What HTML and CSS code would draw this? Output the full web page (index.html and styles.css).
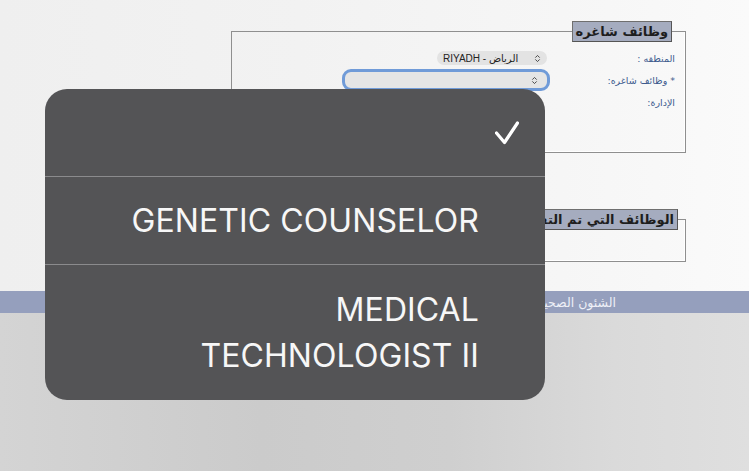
FILE: index.html
```html
<!DOCTYPE html>
<html lang="ar">
<head>
<meta charset="utf-8">
<link rel="stylesheet" href="styles.css">
</head>
<body>
<div class="screen">
  <div class="top">
    <fieldset class="group group-vacancies">
      <legend class="legend legend-a">وظائف شاغره</legend>
      <div class="row">
        <span class="label">المنطقه :</span>
        <div class="select select-region">
          <span class="sel-text">RIYADH - الرياض</span>
          <svg class="chev" viewBox="0 0 8 10" width="7" height="9"><path d="M1.5 4 L4 1.5 L6.5 4 M1.5 6 L4 8.5 L6.5 6" fill="none" stroke="#444" stroke-width="1.1"/></svg>
        </div>
      </div>
      <div class="row">
        <span class="label">* وظائف شاغره:</span>
        <div class="select select-job">
          <span class="sel-text"></span>
          <svg class="chev" viewBox="0 0 8 10" width="7" height="9"><path d="M1.5 4 L4 1.5 L6.5 4 M1.5 6 L4 8.5 L6.5 6" fill="none" stroke="#444" stroke-width="1.1"/></svg>
        </div>
      </div>
      <div class="row">
        <span class="label">الإدارة:</span>
      </div>
    </fieldset>
    <fieldset class="group group-applied">
      <legend class="legend legend-b">الوظائف التي تم التقديم عليها</legend>
    </fieldset>
  </div>
  <div class="band"><span class="band-text">الشئون الصحية</span></div>
  <div class="bottom"></div>

  <div class="menu">
    <div class="option">
      <span class="opt-text"></span>
      <svg class="check" viewBox="0 0 24 24" width="24" height="24"><path d="M1.5 12 L9.5 21.5 L22.5 2" fill="none" stroke="#fff" stroke-width="3.2" stroke-linecap="round" stroke-linejoin="round"/></svg>
    </div>
    <div class="sep"></div>
    <div class="option">
      <span class="opt-text">GENETIC COUNSELOR</span>
      <span class="check-space"></span>
    </div>
    <div class="sep"></div>
    <div class="option option-tall">
      <span class="opt-text">MEDICAL TECHNOLOGIST II</span>
      <span class="check-space"></span>
    </div>
  </div>
</div>
</body>
</html>
```
FILE: styles.css
```css
html, body {
  margin: 0;
  padding: 0;
}
body {
  width: 749px;
  height: 471px;
  overflow: hidden;
  background: #d0d0d0;
}
.screen {
  position: relative;
  width: 749px;
  height: 471px;
  display: flex;
  flex-direction: column;
  font-family: "DejaVu Sans", sans-serif;
}
.top {
  height: 291px;
  box-sizing: border-box;
  padding: 21px 63px 0 231px;
  direction: rtl;
  background: linear-gradient(to right, #efefef 0%, #f2f2f2 40%, #f6f6f6 75%, #fafafa 100%);
}
.group {
  margin: 0;
  padding: 0 10px 0 0;
  border: 1px solid #8f8f8f;
  box-shadow: inset -1px -1px 0 #ffffff;
  min-width: 0;
}
.group-vacancies {
  height: 132px;
  box-sizing: border-box;
}
.group-applied {
  margin-top: 56px;
  height: 53px;
  box-sizing: border-box;
}
.legend {
  padding: 0 3px;
  height: 21px;
  line-height: 20px;
  box-sizing: border-box;
  background: #a5acbf;
  border: 1px solid #6f6f6f;
  border-right-color: #555;
  border-bottom-color: #555;
  color: #1e1e1e;
  font-size: 13px;
  font-weight: bold;
  white-space: nowrap;
}
.legend-a {
  margin-right: 3px;
}
.legend-b {
  margin-right: -3px;
}
.row {
  height: 22px;
  display: flex;
  align-items: center;
}
.row:first-of-type {
  margin-top: 5px;
}
.label {
  width: 125px;
  flex: none;
  font-size: 9.5px;
  color: #3d5b8e;
}
.select {
  display: flex;
  align-items: center;
  direction: ltr;
  box-sizing: border-box;
  background: #e3e3e3;
  border-radius: 7px;
  font-family: "Liberation Sans", "DejaVu Sans", sans-serif;
  font-size: 10px;
  color: #222;
}
.select-region {
  width: 110px;
  height: 14px;
  margin-right: 3px;
  padding: 0 6px;
  justify-content: space-between;
}
.select-job {
  width: 208px;
  height: 22px;
  padding: 0 9px 0 8px;
  justify-content: space-between;
  border: 3px solid #709bd8;
  border-radius: 9px;
  background: #e5e5e5;
}
.sel-text {
  white-space: nowrap;
  unicode-bidi: plaintext;
}
.chev {
  flex: none;
}
.band {
  height: 22px;
  background: #959fbd;
  direction: rtl;
  display: flex;
  align-items: center;
  padding-right: 133px;
}
.band-text {
  color: #eef0f7;
  font-size: 12.5px;
}
.bottom {
  flex: 1;
  background: linear-gradient(to right, #d4d4d4 0%, #cbcbcb 35%, #cfcfcf 60%, #dadada 82%, #dfdfdf 100%);
}
.menu {
  position: absolute;
  left: 45px;
  top: 89px;
  width: 500px;
  height: 311px;
  border-radius: 22px;
  background: #545456;
  display: flex;
  flex-direction: column;
  overflow: hidden;
  font-family: Inter, "Noto Sans", sans-serif;
  color: #f7f7f7;
}
.option {
  display: flex;
  justify-content: flex-end;
  align-items: center;
  gap: 16px;
  padding-right: 26px;
  height: 87px;
}
.option-tall {
  height: 135px;
}
.opt-text {
  max-width: 370px;
  text-align: right;
  font-size: 32px;
  line-height: 46px;
  letter-spacing: 0.1px;
}
.check {
  width: 24px;
  height: 24px;
  flex: none;
}
.check-space {
  width: 24px;
  flex: none;
}
.sep {
  height: 1px;
  background: #8b8b8d;
  flex: none;
}
```
